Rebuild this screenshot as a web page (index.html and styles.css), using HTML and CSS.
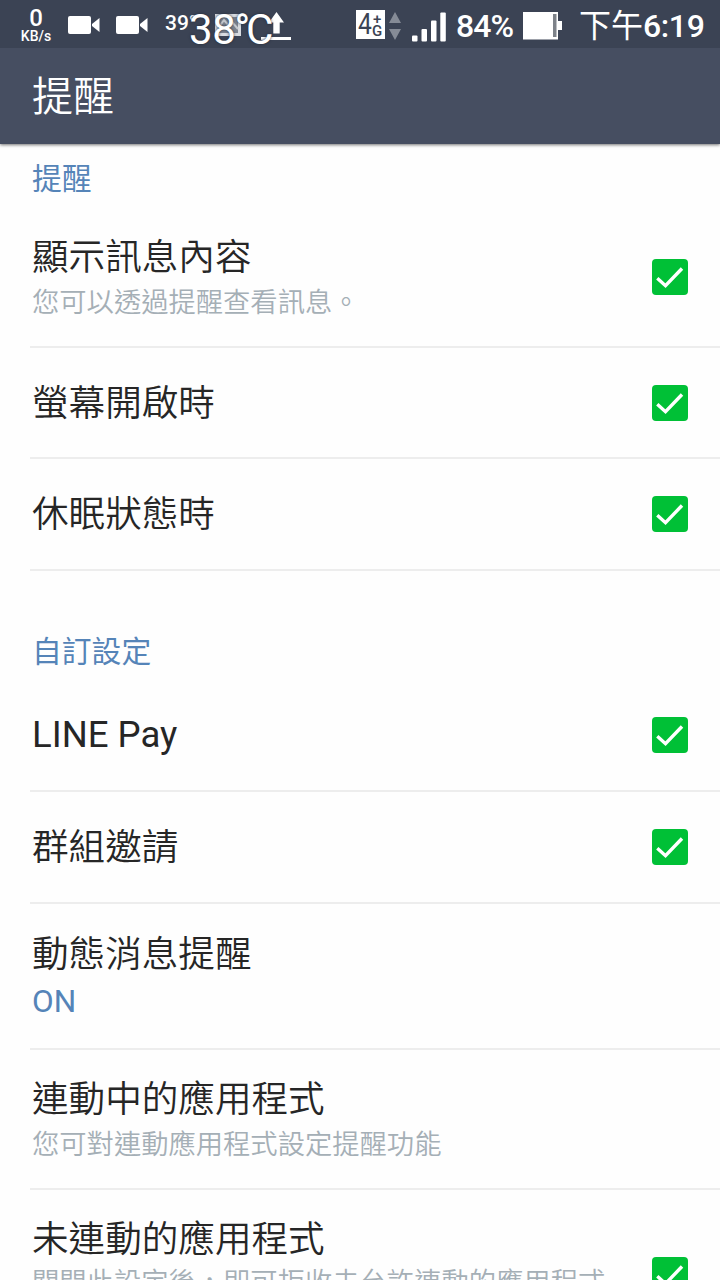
FILE: index.html
```html
<!DOCTYPE html>
<html lang="zh-Hant-TW">
<head>
<meta charset="utf-8">
<title>提醒</title>
<link rel="stylesheet" href="styles.css">
</head>
<body>
<svg class="defs" width="0" height="0">
  <symbol id="check" viewBox="0 0 36 36"><path d="M5.300 19.300 13.500 26.700 30 9.500" fill="none" stroke="#fff" stroke-width="3.400"/></symbol>
  <symbol id="camera" viewBox="0 0 32 18"><rect width="23" height="18" rx="2"/><path d="M31.500 2v14L24 10V8z"/></symbol>
</svg>
<div class="screen">
  <div class="status">
    <div class="speed"><span class="speed-value">0</span><span class="speed-unit">KB/s</span></div>
    <svg class="camera" width="32" height="18"><use href="#camera"/></svg>
    <svg class="camera second" width="32" height="18"><use href="#camera"/></svg>
    <span class="temp-small">39°</span>
    <svg class="picture" width="26" height="22" viewBox="0 0 26 22"><rect x="1.500" y="1.500" width="23" height="19" fill="#7d8490" stroke="#d8dbe0" stroke-width="3"/><path d="M4 13 9 6l5 6 4-3 5 6" fill="none" stroke="#c5c9cf" stroke-width="2"/></svg>
    <svg class="upload" width="32" height="30" viewBox="0 0 32 30"><path d="M17.500 0 25 10.500h-4.300V21.500h-6.400V10.500H10zM2 25h30v3H2z"/></svg>
    <div class="network"><span class="network-four">4</span><span class="network-side"><span>+</span><span>G</span></span></div>
    <svg class="traffic" width="12" height="28" viewBox="0 0 12 28"><path d="M6 0l6 11H0zM6 28l6-11H0z"/></svg>
    <svg class="signal" width="34" height="30" viewBox="0 0 34 30"><rect y="23.500" width="5.500" height="6" rx="1"/><rect x="9.500" y="17" width="5.500" height="12.500" rx="1"/><rect x="19" y="8.500" width="5.500" height="21" rx="1"/><rect x="28.300" y=".5" width="5.500" height="29" rx="1"/></svg>
    <span class="percent">84%</span>
    <svg class="battery" width="40" height="28" viewBox="0 0 40 28"><rect width="35" height="27.500"/><rect x="30" y="2" width="3.500" height="23" fill="#7d8289"/><rect x="35" y="9" width="4" height="9"/></svg>
    <span class="clock">下午<span class="time">6:19</span></span>
    <span class="temp-large">38<span class="degree">°</span>C</span>
  </div>
  <header class="bar">提醒</header>
  <main>
    <h2 class="section">提醒</h2>
    <div class="row first"><div class="copy"><div class="label">顯示訊息內容</div><div class="note">您可以透過提醒查看訊息。</div></div><svg class="box"><use href="#check"/></svg></div>
    <div class="row"><div class="copy"><div class="label">螢幕開啟時</div></div><svg class="box"><use href="#check"/></svg></div>
    <div class="row"><div class="copy"><div class="label">休眠狀態時</div></div><svg class="box"><use href="#check"/></svg></div>
    <h2 class="section custom">自訂設定</h2>
    <div class="row pay"><div class="copy"><div class="label latin">LINE Pay</div></div><svg class="box"><use href="#check"/></svg></div>
    <div class="row"><div class="copy"><div class="label">群組邀請</div></div><svg class="box"><use href="#check"/></svg></div>
    <div class="row timeline"><div class="copy"><div class="label">動態消息提醒</div><div class="value">ON</div></div></div>
    <div class="row apps"><div class="copy"><div class="label">連動中的應用程式</div><div class="note">您可對連動應用程式設定提醒功能</div></div></div>
    <div class="row last"><div class="copy"><div class="label">未連動的應用程式</div><div class="note">關閉此設定後，即可拒收未允許連動的應用程式</div></div><svg class="box"><use href="#check"/></svg></div>
  </main>
</div>
</body>
</html>
```

FILE: styles.css
```css
* { box-sizing: border-box; }
body { margin: 0; background: #fefefe; font-family: Roboto, "Noto Sans CJK TC", sans-serif; }
.defs { position: absolute; }
.screen { width: 720px; height: 1280px; overflow: hidden; display: flex; flex-direction: column; }
.status { position: relative; z-index: 2; flex: none; height: 48px; display: flex; align-items: flex-start; background: #3b4354; color: #fff; fill: #fff; line-height: 1; white-space: nowrap; }
.status svg { flex: none; }
.speed { width: 34px; margin: 7px 0 0 19px; display: flex; flex-direction: column; align-items: center; font-weight: 500; }
.speed-value { font-size: 24px; line-height: 22px; }
.speed-unit { font-size: 14px; line-height: 14px; }
.camera { margin: 16px 0 0 15px; }
.second { margin-left: 16px; }
.temp-small { width: 33px; margin: 13px 0 0 17px; font-size: 21px; font-weight: 500; }
.picture { margin: 14px 0 0 17px; }
.upload { margin: 12px 0 0 18px; }
.network { width: 29px; height: 29px; margin: 10px 0 0 65px; padding-left: 2px; display: flex; align-items: center; background: #fff; color: #3b4354; }
.network-four { width: 14px; font-size: 29px; transform: scaleX(.85); transform-origin: left; }
.network-side { display: flex; flex-direction: column; align-items: center; font-size: 15px; font-weight: 500; line-height: 12px; }
.traffic { margin: 12px 0 0 4px; fill: #858b96; }
.signal { margin: 12px 0 0 11px; }
.percent { width: 59px; margin: 10px 0 0 10px; font-size: 32px; font-weight: 500; letter-spacing: -.9px; }
.battery { margin: 12px 0 0 8px; }
.clock { margin: 9px 0 0 16px; font-size: 32px; line-height: 34px; }
.time { font-weight: 500; letter-spacing: -.4px; }
.temp-large { position: absolute; left: 189px; top: 9px; font-size: 42px; font-weight: 400; letter-spacing: -.3px; text-shadow: 0 0 3px #222a38; }
.degree { margin: 0 -4px 0 -1px; }
.bar { position: relative; flex: none; height: 96px; padding: 2px 0 0 32px; background: #464e61; box-shadow: 0 1px 3px rgba(0, 0, 0, .55); color: #fff; font-size: 41px; font-weight: 350; line-height: 94px; }
main { flex: 1; overflow: hidden; }
.section { margin: 0; height: 64px; padding: 15px 32px 0; color: #5584b8; font-size: 29.8px; font-weight: 400; line-height: 40px; }
.custom { height: 110px; padding-top: 61px; }
.row { display: flex; align-items: center; height: 111.4px; margin-left: 30px; padding: 0 32px 0 2px; border-bottom: 2px solid #ededed; }
.copy { flex: 1; padding-top: 2px; white-space: nowrap; }
.label { color: #262626; font-size: 36.6px; font-weight: 350; line-height: 44px; }
.latin { font-weight: 400; }
.pay .copy { padding-top: 0; }
.note { color: #a5afb6; font-size: 27.3px; font-weight: 350; line-height: 46px; }
.value { color: #5584b8; font-size: 31.5px; font-weight: 400; line-height: 50px; }
.box { flex: none; width: 36px; height: 36px; border-radius: 4px; background: #00c036; }
.first { height: 140px; }
.first .copy { padding-top: 8px; }
.timeline { height: 146px; }
.timeline .copy { padding-top: 8px; }
.apps { height: 140px; }
.apps .copy { padding-top: 8px; }
.last { height: 168px; align-items: flex-start; border: 0; }
.last .copy { padding-top: 28px; }
.last .note { margin-top: -2px; }
.last .box { margin-top: 67px; }
```
